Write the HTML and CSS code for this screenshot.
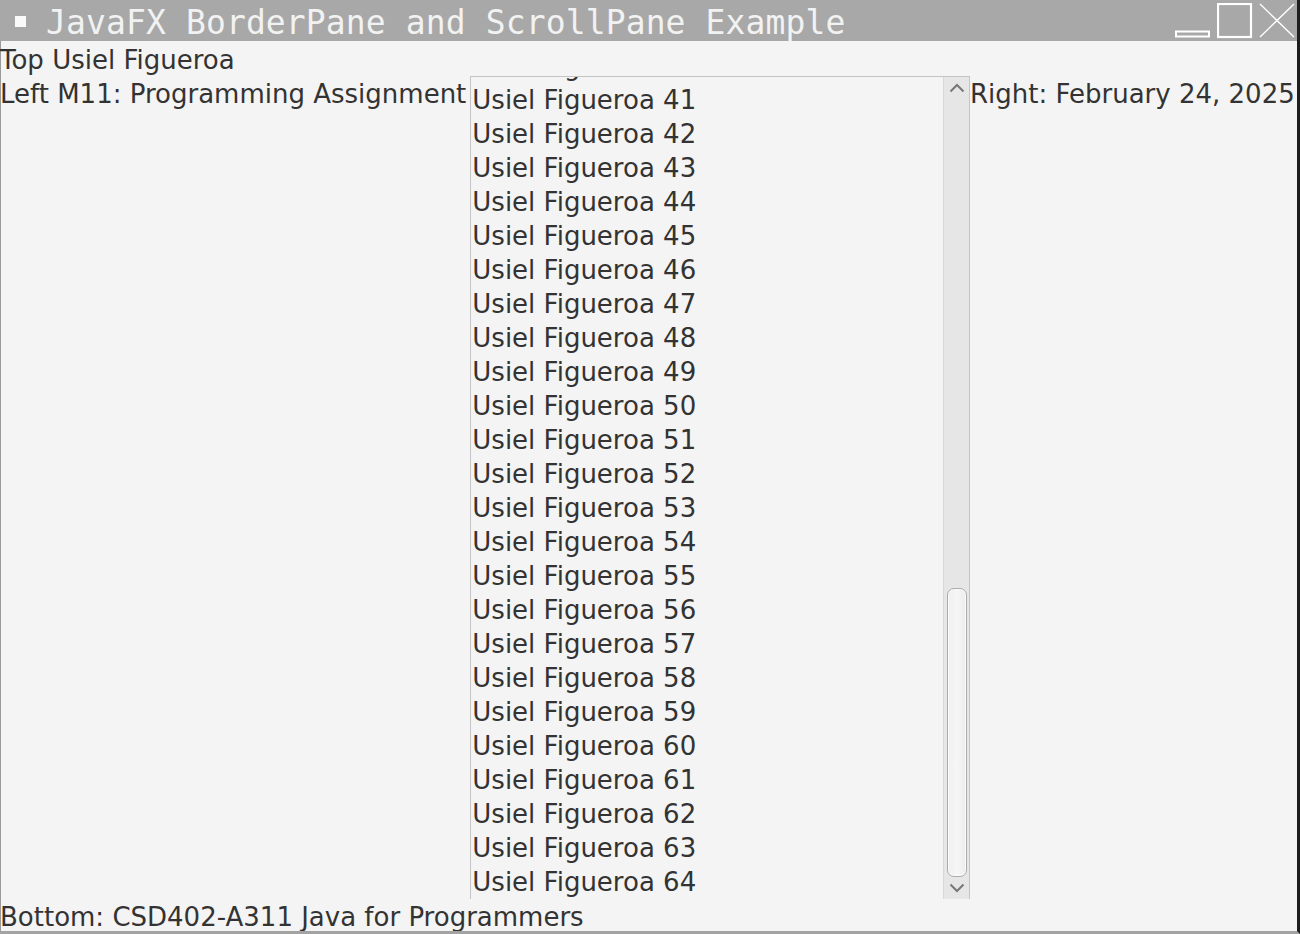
FILE: index.html
```html
<!DOCTYPE html>
<html>
<head>
<meta charset="utf-8">
<link rel="stylesheet" href="styles.css">
</head>
<body>
<div class="window">
  <div class="titlebar">
    <span class="menu-box"></span>
    <span class="title">JavaFX BorderPane and ScrollPane Example</span>
    <div class="controls">
      <svg class="ctl" width="36" height="36" viewBox="0 0 36 36"><rect x="1" y="28.5" width="33" height="5" fill="none" stroke="#fff" stroke-width="2"/></svg>
      <svg class="ctl" width="36" height="36" viewBox="0 0 36 36"><rect x="1" y="1" width="33" height="33" fill="none" stroke="#fff" stroke-width="2.2"/></svg>
      <svg class="ctl" width="36" height="36" viewBox="0 0 36 36"><path d="M1 1 L35 34 M35 1 L1 34" fill="none" stroke="#fff" stroke-width="1.4"/></svg>
    </div>
  </div>
  <div class="content">
    <div class="label top">Top Usiel Figueroa</div>
    <div class="middle">
      <div class="label left">Left M11: Programming Assignment</div>
      <div class="scrollpane">
        <div class="viewport">
          <div class="list">
            <div class="item">Usiel Figueroa 40</div>
            <div class="item">Usiel Figueroa 41</div>
            <div class="item">Usiel Figueroa 42</div>
            <div class="item">Usiel Figueroa 43</div>
            <div class="item">Usiel Figueroa 44</div>
            <div class="item">Usiel Figueroa 45</div>
            <div class="item">Usiel Figueroa 46</div>
            <div class="item">Usiel Figueroa 47</div>
            <div class="item">Usiel Figueroa 48</div>
            <div class="item">Usiel Figueroa 49</div>
            <div class="item">Usiel Figueroa 50</div>
            <div class="item">Usiel Figueroa 51</div>
            <div class="item">Usiel Figueroa 52</div>
            <div class="item">Usiel Figueroa 53</div>
            <div class="item">Usiel Figueroa 54</div>
            <div class="item">Usiel Figueroa 55</div>
            <div class="item">Usiel Figueroa 56</div>
            <div class="item">Usiel Figueroa 57</div>
            <div class="item">Usiel Figueroa 58</div>
            <div class="item">Usiel Figueroa 59</div>
            <div class="item">Usiel Figueroa 60</div>
            <div class="item">Usiel Figueroa 61</div>
            <div class="item">Usiel Figueroa 62</div>
            <div class="item">Usiel Figueroa 63</div>
            <div class="item">Usiel Figueroa 64</div>
          </div>
        </div>
        <div class="scrollbar">
          <div class="arrow-btn">
            <svg width="16" height="10" viewBox="0 0 16 10"><path d="M1.5 8.5 L8 2 L14.5 8.5" fill="none" stroke="#777" stroke-width="2"/></svg>
          </div>
          <div class="track">
            <div class="thumb"></div>
          </div>
          <div class="arrow-btn">
            <svg width="16" height="10" viewBox="0 0 16 10"><path d="M1.5 1.5 L8 8 L14.5 1.5" fill="none" stroke="#777" stroke-width="2"/></svg>
          </div>
        </div>
      </div>
      <div class="label right">Right: February 24, 2025</div>
    </div>
    <div class="label bottom">Bottom: CSD402-A311 Java for Programmers</div>
  </div>
</div>
</body>
</html>
```

FILE: styles.css
```css
html, body {
  margin: 0;
  padding: 0;
  background: #f4f4f4;
}
.window {
  width: 1300px;
  height: 934px;
  display: flex;
  flex-direction: column;
  box-sizing: border-box;
  border-right: 3px solid #1e1e1e;
  border-bottom: 3px solid #a3a3a3;
  overflow: hidden;
}
.titlebar {
  height: 41px;
  flex: none;
  background: #a8a8a8;
  display: flex;
  align-items: center;
}
.menu-box {
  width: 11px;
  height: 11px;
  background: #fafafa;
  margin-left: 15px;
  margin-top: 1px;
  flex: none;
}
.title {
  font-family: "DejaVu Sans Mono", monospace;
  font-size: 33px;
  letter-spacing: 0.12px;
  color: #f2f2f2;
  margin-left: 20px;
  margin-top: 4px;
  white-space: nowrap;
  line-height: 41px;
}
.controls {
  margin-left: auto;
  display: flex;
  gap: 6px;
  align-self: flex-start;
  margin-top: 3px;
  margin-right: 2px;
}
.ctl {
  display: block;
}
.content {
  flex: 1;
  display: flex;
  flex-direction: column;
  background: #f4f4f4;
  border-left: 1px solid #9a9a9a;
  min-height: 0;
}
.label {
  font-family: "DejaVu Sans", sans-serif;
  font-size: 26px;
  color: #333333;
  line-height: 34px;
  white-space: nowrap;
  box-sizing: border-box;
}
.top {
  margin-left: -1px;
  height: 35px;
  padding-top: 2px;
}
.middle {
  flex: 1;
  display: flex;
  min-height: 0;
}
.left {
  flex: none;
  margin-left: -1px;
  padding-right: 4px;
  padding-top: 1px;
}
.right {
  flex: none;
  min-width: 327px;
  padding-top: 1px;
}
.bottom {
  height: 32px;
  line-height: 34px;
  padding-top: 1px;
  margin-left: -1px;
  overflow: visible;
}
.scrollpane {
  flex: 1;
  display: flex;
  border: 1px solid #c4c4c4;
  border-bottom: none;
  background: #f4f4f4;
  min-width: 0;
}
.viewport {
  flex: 1;
  overflow: hidden;
  min-width: 0;
}
.list {
  margin-top: -28px;
}
.item {
  font-family: "DejaVu Sans", sans-serif;
  font-size: 26px;
  color: #333333;
  line-height: 34px;
  height: 34px;
  padding-left: 1px;
  white-space: nowrap;
}
.scrollbar {
  width: 25px;
  flex: none;
  display: flex;
  flex-direction: column;
  background: #e6e6e6;
  border-left: 1px solid #d8d8d8;
}
.arrow-btn {
  height: 22px;
  flex: none;
  display: flex;
  align-items: center;
  justify-content: center;
}
.track {
  flex: 1;
  display: flex;
  flex-direction: column;
  justify-content: flex-end;
  padding: 0 2px 0 3px;
}
.thumb {
  height: 287px;
  border: 1px solid #ababab;
  border-radius: 7px;
  background: linear-gradient(to right, #f0f0f0, #f6f6f6 50%, #ececec);
  box-shadow: inset 0 0 0 1px #fbfbfb;
}
```
